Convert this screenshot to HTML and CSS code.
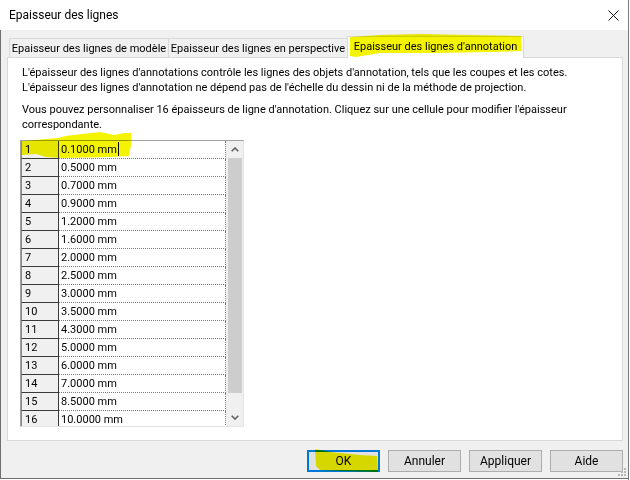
FILE: index.html
```html
<!DOCTYPE html>
<html lang="fr">
<head>
  <meta charset="UTF-8">
  <title>Epaisseur des lignes</title>
  <link rel="stylesheet" href="styles.css">
</head>
<body>
  <div class="window">
    <div class="titlebar">
      <span class="title">Epaisseur des lignes</span>
      <svg class="close" width="11" height="11" viewBox="0 0 11 11">
        <path d="M0.5 0.5 L10.5 10.5 M10.5 0.5 L0.5 10.5" stroke="#111" stroke-width="1"/>
      </svg>
    </div>

    <div class="dialog">
      <div class="tabs">
        <div class="tab tab-model">Epaisseur des lignes de modèle</div>
        <div class="tab tab-persp">Epaisseur des lignes en perspective</div>
        <div class="tab tab-annot active">Epaisseur des lignes d'annotation</div>
      </div>

      <div class="panel">
        <p>L'épaisseur des lignes d'annotations contrôle les lignes des objets d'annotation, tels que les coupes et les cotes.<br>L'épaisseur des lignes d'annotation ne dépend pas de l'échelle du dessin ni de la méthode de projection.</p>
        <p class="intro">Vous pouvez personnaliser 16 épaisseurs de ligne d'annotation. Cliquez sur une cellule pour modifier l'épaisseur<br>correspondante.</p>

        <div class="grid">
          <div class="rows">
            <div class="row"><div class="num">1</div><div class="val">0.1000 mm<span class="caret"></span></div></div>
            <div class="row"><div class="num">2</div><div class="val">0.5000 mm</div></div>
            <div class="row"><div class="num">3</div><div class="val">0.7000 mm</div></div>
            <div class="row"><div class="num">4</div><div class="val">0.9000 mm</div></div>
            <div class="row"><div class="num">5</div><div class="val">1.2000 mm</div></div>
            <div class="row"><div class="num">6</div><div class="val">1.6000 mm</div></div>
            <div class="row"><div class="num">7</div><div class="val">2.0000 mm</div></div>
            <div class="row"><div class="num">8</div><div class="val">2.5000 mm</div></div>
            <div class="row"><div class="num">9</div><div class="val">3.0000 mm</div></div>
            <div class="row"><div class="num">10</div><div class="val">3.5000 mm</div></div>
            <div class="row"><div class="num">11</div><div class="val">4.3000 mm</div></div>
            <div class="row"><div class="num">12</div><div class="val">5.0000 mm</div></div>
            <div class="row"><div class="num">13</div><div class="val">6.0000 mm</div></div>
            <div class="row"><div class="num">14</div><div class="val">7.0000 mm</div></div>
            <div class="row"><div class="num">15</div><div class="val">8.5000 mm</div></div>
            <div class="row"><div class="num">16</div><div class="val">10.0000 mm</div></div>
          </div>
          <div class="scroll">
            <div class="arrow">
              <svg width="8" height="5" viewBox="0 0 8 5"><path d="M0.7 4.3 L4 1 L7.3 4.3" fill="none" stroke="#606060" stroke-width="1.6"/></svg>
            </div>
            <div class="thumb"></div>
            <div class="track"></div>
            <div class="arrow">
              <svg width="8" height="5" viewBox="0 0 8 5"><path d="M0.7 0.7 L4 4 L7.3 0.7" fill="none" stroke="#606060" stroke-width="1.6"/></svg>
            </div>
          </div>
        </div>
      </div>

      <div class="buttons">
        <button class="btn default">OK</button>
        <button class="btn">Annuler</button>
        <button class="btn">Appliquer</button>
        <button class="btn">Aide</button>
      </div>
    </div>

    <svg class="grip" width="8" height="8" viewBox="0 0 8 8">
      <rect x="6" y="0" width="2" height="2" fill="#b8b8b8"/>
      <rect x="3" y="3" width="2" height="2" fill="#b8b8b8"/>
      <rect x="6" y="3" width="2" height="2" fill="#b8b8b8"/>
      <rect x="0" y="6" width="2" height="2" fill="#b8b8b8"/>
      <rect x="3" y="6" width="2" height="2" fill="#b8b8b8"/>
      <rect x="6" y="6" width="2" height="2" fill="#b8b8b8"/>
    </svg>

    <!-- highlighter marks drawn over the screenshot -->
    <svg class="marker" width="630" height="480" viewBox="0 0 630 480">
      <path d="M350 37 L380 35 L420 34 L470 35 L521 36 L522 51 L490 52 L430 53 L380 53 L356 57 L350 56 Z"/>
      <path d="M22 141 L58 138 L66 136 L82 134 L100 132 L114 135 L124 133 L131 133 L131 145 L129 156 L110 157 L62 158 L46 157 L36 154 L22 155 Z"/>
      <path d="M315 449 L330 452 L360 455 L377 456 L378 472 L345 471 L320 470 L316 466 Z"/>
    </svg>
  </div>
</body>
</html>
```

FILE: styles.css
```css
body {
  margin: 0;
  font-family: Roboto, "Segoe UI", sans-serif;
  font-size: 11px;
  color: #000;
  background: #fff;
}

.window {
  position: relative;
  width: 628px;
  height: 480px;
  border-right: 1px solid #7a7a7a;
  background: #fff;
  overflow: hidden;
}

.titlebar {
  height: 30px;
  display: flex;
  align-items: center;
  justify-content: space-between;
  padding: 0 9px;
  box-sizing: border-box;
}

.title {
  font-size: 12px;
}

.close {
  display: block;
}

.dialog {
  height: 448px;
  background: #f0f0f0;
  border-left: 1px solid #6e6e6e;
  border-bottom: 1px solid #6e6e6e;
}

/* tab strip */

.tabs {
  display: flex;
  align-items: flex-end;
  height: 27px;
  padding-left: 8px;
}

.tab {
  height: 19px;
  box-sizing: border-box;
  border: 1px solid #d9d9d9;
  border-bottom: none;
  background: #f0f0f0;
  text-align: center;
  line-height: 19px;
  white-space: nowrap;
}

.tab + .tab {
  margin-left: -1px;
}

.tab-model {
  width: 160px;
}

.tab-persp {
  width: 180px;
}

.tab-annot {
  width: 177px;
}

.tab.active {
  position: relative;
  z-index: 1;
  height: 22px;
  margin-bottom: -1px;
  background: #fff;
  line-height: 20px;
}

/* tab page */

.panel {
  margin-left: 6px;
  width: 616px;
  height: 384px;
  box-sizing: border-box;
  border: 1px solid #d9d9d9;
  background: #fff;
  padding: 7px 14px;
}

.panel p {
  margin: 0 0 7px;
  line-height: 15px;
}

.panel p.intro {
  margin-bottom: 8px;
}

.grid {
  display: flex;
  margin-left: -2px;
  width: 224px;
  height: 287px;
  box-sizing: border-box;
  border: 1px solid;
  border-color: #a0a0a0 #e3e3e3 #e3e3e3 #a0a0a0;
}

.rows {
  width: 205px;
  overflow: hidden;
}

.row {
  display: flex;
  height: 18px;
}

.num {
  width: 38px;
  box-sizing: border-box;
  border-left: 1px solid #8a8a8a;
  border-right: 1px solid #3a3a3a;
  border-bottom: 1px solid #3a3a3a;
  background: #f0f0f0;
  padding-left: 3px;
  line-height: 17px;
}

.val {
  width: 167px;
  box-sizing: border-box;
  border-right: 1px dotted #7a7a7a;
  border-bottom: 1px dotted #7a7a7a;
  padding-left: 2px;
  line-height: 17px;
  white-space: nowrap;
}

.caret {
  display: inline-block;
  width: 1px;
  height: 14px;
  margin-left: 1px;
  background: #000;
  vertical-align: -3px;
}

.scroll {
  width: 17px;
  display: flex;
  flex-direction: column;
  background: #f0f0f0;
}

.arrow {
  height: 17px;
  display: flex;
  align-items: center;
  justify-content: center;
}

.arrow svg {
  display: block;
}

.thumb {
  height: 235px;
  width: 14px;
  margin-left: 2px;
  background: #cdcdcd;
}

.track {
  flex: 1;
}

/* dialog buttons */

.buttons {
  display: flex;
  justify-content: flex-end;
  gap: 8px;
  width: 616px;
  margin: 9px 0 0 6px;
}

.btn {
  width: 73px;
  height: 22px;
  box-sizing: border-box;
  padding: 0;
  border: 1px solid #adadad;
  background: #e1e1e1;
  font: inherit;
  font-size: 12px;
  color: #000;
}

.btn.default {
  border: 2px solid #0078d7;
}

.grip {
  position: absolute;
  right: 2px;
  bottom: 4px;
}

.marker {
  position: absolute;
  top: 0;
  left: 0;
  z-index: 2;
  pointer-events: none;
  mix-blend-mode: multiply;
  fill: #f4f400;
}
```
